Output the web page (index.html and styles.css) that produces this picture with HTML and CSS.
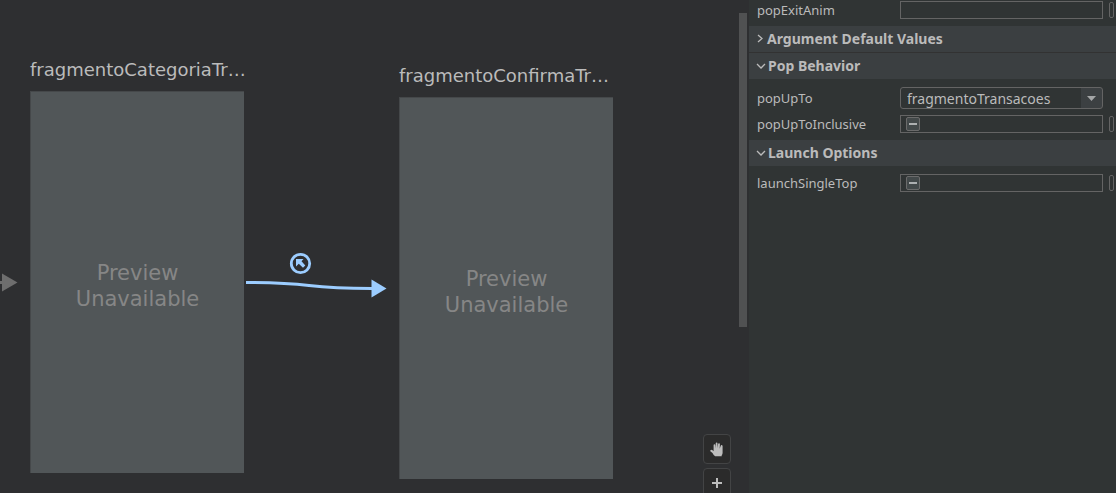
FILE: index.html
```html
<!DOCTYPE html>
<html lang="en">
<head>
<meta charset="utf-8">
<title>Navigation Editor</title>
<link rel="stylesheet" href="styles.css">
</head>
<body>
<div class="editor">
  <main class="canvas">
    <section class="node node-category">
      <h2 class="node-title">fragmentoCategoriaTr…</h2>
      <div class="preview">Preview<br>Unavailable</div>
    </section>
    <section class="node node-confirm">
      <h2 class="node-title">fragmentoConfirmaTr…</h2>
      <div class="preview">Preview<br>Unavailable</div>
    </section>
    <svg class="edges" width="400" height="310" viewBox="0 0 400 310" aria-hidden="true">
      <path d="M0 282.500H4" stroke="#6e6e6e" stroke-width="3"/>
      <path d="M2 273.500L17.500 282.500L2 291.500Z" fill="#6e6e6e"/>
      <path d="M246 282.500C322 282.500 296 288.500 372 288.500" fill="none" stroke="#9ccdff" stroke-width="3"/>
      <path d="M371.500 279.500L386.500 288.500L371.500 297.500Z" fill="#9ccdff"/>
      <circle cx="300.500" cy="263.500" r="9.200" fill="none" stroke="#9ccdff" stroke-width="2.800"/>
      <path d="M296 259H303.500L301.500 261.200L305.300 265.500L303 267.800L298.800 263.700L296 266.500Z" fill="#9ccdff"/>
    </svg>
    <div class="tools">
      <button class="tool" type="button" aria-label="Pan">
        <svg width="14" height="15" viewBox="0 0 14 15"><path d="M3.600 8V3.300Q3.600 2.300 4.400 2.300Q5.200 2.300 5.300 3.300L5.700 6.500V1.500Q5.800.6 6.600.6Q7.400.6 7.500 1.500V6.300L8.100 2Q8.300 1.100 9.100 1.200Q9.900 1.300 9.900 2.200L9.700 6.800L10.700 3.700Q11 2.900 11.800 3Q12.700 3.200 12.600 4.200V11Q12.500 12.500 11.700 13.300V14.300H5.200Q3.500 13.200 2.500 11L.3 9.200Q0 8.300.8 7.900Q1.700 7.600 2.600 8.300L3.600 9.200Z" fill="#bdbdbd"/></svg>
      </button>
      <button class="tool" type="button" aria-label="Zoom in">
        <svg width="10" height="10" viewBox="0 0 10 10"><path d="M5 0V10M0 5H10" stroke="#bdbdbd" stroke-width="2"/></svg>
      </button>
    </div>
    <div class="scroll-thumb"></div>
  </main>
  <aside class="panel">
    <div class="group group-first">
      <div class="row">
        <label for="exit-anim">popExitAnim</label>
        <input class="field" id="exit-anim" type="text">
        <button class="pick" type="button" aria-label="Pick popExitAnim"></button>
      </div>
    </div>
    <button class="heading" type="button">
      <svg class="chevron" width="9" height="9" viewBox="0 0 9 9"><path d="M2 1L6 4.500L2 8"/></svg>Argument Default Values
    </button>
    <button class="heading heading-next" type="button">
      <svg class="chevron" width="10" height="9" viewBox="0 0 10 9"><path d="M1 3L5 7L9 3"/></svg>Pop Behavior
    </button>
    <div class="group">
      <div class="row">
        <label for="pop-up-to">popUpTo</label>
        <div class="combo">
          <select id="pop-up-to"><option>fragmentoTransacoes</option></select>
          <svg class="caret" width="9" height="5" viewBox="0 0 9 5"><path d="M0 0H9L4.500 5Z" fill="#a4a6a7"/></svg>
        </div>
      </div>
      <div class="row">
        <label for="inclusive">popUpToInclusive</label>
        <div class="field"><input class="check" id="inclusive" type="checkbox"></div>
        <button class="pick" type="button" aria-label="Pick popUpToInclusive"></button>
      </div>
    </div>
    <button class="heading" type="button">
      <svg class="chevron" width="10" height="9" viewBox="0 0 10 9"><path d="M1 3L5 7L9 3"/></svg>Launch Options
    </button>
    <div class="group">
      <div class="row">
        <label for="single-top">launchSingleTop</label>
        <div class="field"><input class="check" id="single-top" type="checkbox"></div>
        <button class="pick" type="button" aria-label="Pick launchSingleTop"></button>
      </div>
    </div>
  </aside>
</div>
</body>
</html>
```
FILE: styles.css
```css
* {
  box-sizing: border-box;
}

body {
  margin: 0;
  background: #2e2f31;
  color: #bbbbbb;
  font-family: "Noto Sans", "Open Sans", sans-serif;
  font-size: 13px;
}

button,
input,
select {
  margin: 0;
  color: inherit;
  font: inherit;
}

.editor {
  display: grid;
  grid-template-columns: 1fr 368px;
  height: 100vh;
}

.canvas {
  position: relative;
  overflow: hidden;
  background: #2e2f31;
  font-family: "DejaVu Sans", sans-serif;
}

/* Destinations placed on the free canvas */
.node {
  position: absolute;
  width: 214px;
}

.node-category {
  left: 30px;
  top: 58px;
}

.node-confirm {
  left: 399px;
  top: 64px;
}

.node-title {
  margin: 0 0 9px;
  font-size: 18px;
  font-weight: 400;
  line-height: 24px;
  white-space: nowrap;
}

.preview {
  display: grid;
  place-items: center;
  align-content: center;
  height: 382px;
  padding-top: 6px;
  border: solid #45484a;
  border-width: 1px 0 0 1px;
  background: #515658;
  color: #868686;
  font-size: 21px;
  line-height: 26px;
  text-align: center;
}

.edges {
  position: absolute;
  left: 0;
  top: 0;
}

.tools {
  position: absolute;
  right: 17px;
  top: 434px;
  display: grid;
  gap: 4px;
}

.tool {
  display: grid;
  place-items: center;
  width: 28px;
  height: 30px;
  padding: 0;
  border: 1px solid #434445;
  border-radius: 4px;
  background: #2b2b2b;
}

.scroll-thumb {
  position: absolute;
  right: 1px;
  top: 13px;
  width: 8px;
  height: 314px;
  background: #505152;
}

.panel {
  border-left: 1px solid #2e2f31;
  background: #303434;
  overflow: hidden;
}

.group {
  display: grid;
  gap: 6px;
  padding: 8px 2px 7px 8px;
}

.group-first {
  padding-top: 1px;
}

.row {
  display: grid;
  grid-template-columns: 137px 1fr 5px;
  column-gap: 6px;
  align-items: center;
}

.row label {
  line-height: 18px;
}

.heading {
  display: flex;
  align-items: center;
  gap: 2px;
  width: 100%;
  height: 26px;
  padding: 0 7px 2px;
  border: 0;
  background: #3b3f41;
  font-size: 14px;
  font-weight: 700;
  text-align: left;
}

.heading-next {
  height: 27px;
  border-top: 1px solid #323232;
}

.chevron {
  fill: none;
  stroke: #bbbbbb;
  stroke-width: 1.3;
}

.field {
  display: flex;
  align-items: center;
  width: 100%;
  height: 18px;
  padding: 0 5px;
  border: 1px solid #646464;
  background: #303434;
}

.pick {
  height: 16px;
  padding: 0;
  border: 1px solid #646464;
  border-radius: 2px;
  background: transparent;
}

.check {
  appearance: none;
  width: 14px;
  height: 14px;
  border: 1px solid #6b6b6b;
  border-radius: 2px;
  background: linear-gradient(#adb0b1, #adb0b1) center / 8px 2px no-repeat #43494a;
}

.combo {
  position: relative;
}

.combo select {
  display: block;
  appearance: none;
  width: 100%;
  height: 22px;
  padding: 0 24px 0 6px;
  border: 1px solid #646464;
  border-radius: 3px;
  background: linear-gradient(#3c4042, #3c4042) right / 21px 100% no-repeat #303434;
  font-size: 14px;
}

.caret {
  position: absolute;
  right: 7px;
  top: 9px;
  pointer-events: none;
}
```
